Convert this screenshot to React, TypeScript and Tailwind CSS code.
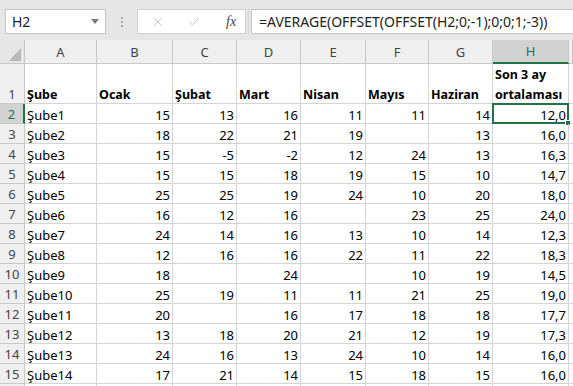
import React from 'react';
import { X, Check } from 'lucide-react';

const colW = ['w-[72px]', 'w-[76px]', 'w-[64px]', 'w-[64px]', 'w-[65px]', 'w-[63px]', 'w-[64px]', 'w-[76px]', 'flex-1'];
const letters = ['A', 'B', 'C', 'D', 'E', 'F', 'G', 'H', ''];

const rows: string[][] = [
  ['Şube1', '15', '13', '16', '11', '11', '14', '12,0'],
  ['Şube2', '18', '22', '21', '19', '', '13', '16,0'],
  ['Şube3', '15', '-5', '-2', '12', '24', '13', '16,3'],
  ['Şube4', '15', '15', '18', '19', '15', '10', '14,7'],
  ['Şube5', '25', '25', '19', '24', '10', '20', '18,0'],
  ['Şube6', '16', '12', '16', '', '23', '25', '24,0'],
  ['Şube7', '24', '14', '16', '13', '10', '14', '12,3'],
  ['Şube8', '12', '16', '16', '22', '11', '22', '18,3'],
  ['Şube9', '18', '', '24', '', '10', '19', '14,5'],
  ['Şube10', '25', '19', '11', '11', '21', '25', '19,0'],
  ['Şube11', '20', '', '16', '17', '18', '18', '17,7'],
  ['Şube12', '13', '18', '20', '21', '12', '19', '17,3'],
  ['Şube13', '24', '16', '13', '24', '10', '14', '16,0'],
  ['Şube14', '17', '21', '14', '15', '18', '15', '16,0'],
  ['', '', '', '', '', '', '', ''],
];

const heads = ['Şube', 'Ocak', 'Şubat', 'Mart', 'Nisan', 'Mayıs', 'Haziran'];

const FormulaBar = () => (
  <div className="h-[40px] bg-[#e6e6e6] flex items-start pt-[9px] pl-[5px]">
    <div className="w-[101px] h-[25px] bg-white border border-[#c6c6c6] flex items-center justify-between pl-[6px] pr-[6px] text-[14px] text-[#222]">
      <span>H2</span>
      <svg width="8" height="5" viewBox="0 0 8 5"><path d="M0 0h8L4 5z" fill="#7b7b7b" /></svg>
    </div>
    <div className="w-[31px] h-[25px] flex flex-col items-center justify-center gap-[2px]">
      <span className="w-[2px] h-[2px] bg-[#a8a8a8]" />
      <span className="w-[2px] h-[2px] bg-[#a8a8a8]" />
      <span className="w-[2px] h-[2px] bg-[#a8a8a8]" />
    </div>
    <div className="w-[109px] h-[25px] bg-white border border-[#d0d0d0] flex items-center">
      <X size={14} strokeWidth={1.2} color="#aaaaaa" className="ml-[13px]" />
      <Check size={14} strokeWidth={1.3} color="#b0b0b0" className="ml-[22px]" />
      <span className="ml-[25px] text-[14px] italic text-[#444] font-['Liberation_Serif',serif]">fx</span>
    </div>
    <div className="w-[5px] h-[25px] flex justify-center">
      <span className="w-[1px] h-full bg-[#d8d8d8]" />
    </div>
    <div className="flex-1 h-[25px] bg-white border border-r-0 border-[#c6c6c6] flex items-center pl-[7px] text-[14px] text-[#222] whitespace-nowrap overflow-hidden">
      =AVERAGE(OFFSET(OFFSET(H2;0;-1);0;0;1;-3))
    </div>
  </div>
);

export default function App() {
  return (
    <div className="w-[573px] h-[386px] overflow-hidden bg-white font-['Noto_Sans',sans-serif] text-[13px] text-black">
      <FormulaBar />
      {/* column headers */}
      <div className="flex h-[24px] bg-[#e6e6e6]">
        <div className="w-[25px] border-r border-b border-[#c8c8c8] bg-[#e6e6e6] flex items-end justify-end pr-[3px] pb-[2px]">
          <svg width="12" height="13" viewBox="0 0 12 13"><path d="M12 0V13H0z" fill="#b9b9b9" /></svg>
        </div>
        {letters.map((l, i) => (
          <div
            key={i}
            className={`${colW[i]} flex items-center justify-center pt-[2px] border-r ${
              l === 'H'
                ? 'bg-[#d2d2d2] text-[#217346] border-b-2 border-b-[#217346] border-r-[#c8c8c8]'
                : 'bg-[#efefef] text-[#444] border-b border-[#c8c8c8]'
            }`}
          >
            {l}
          </div>
        ))}
      </div>
      {/* row 1 */}
      <div className="flex h-[40px]">
        <div className="w-[25px] bg-[#efefef] border-r border-b border-[#c8c8c8] flex items-end justify-center text-[#444] leading-[18px]">1</div>
        {heads.map((h, i) => (
          <div key={i} className={`${colW[i]} border-r border-b border-[#d4d4d4] flex items-end pl-[2px] font-bold text-[12.5px] leading-[17px]`}>
            {h}
          </div>
        ))}
        <div className="w-[76px] border-r border-b border-[#d4d4d4] flex flex-col justify-end pl-[2px] font-bold text-[12.5px] leading-[20px]">
          <span>Son 3 ay</span>
          <span className="-mb-[2px]">ortalaması</span>
        </div>
        <div className="flex-1 border-b border-[#d4d4d4]" />
      </div>
      {rows.map((r, ri) => {
        const sel = ri === 0;
        const last = ri === rows.length - 1;
        return (
          <div key={ri} className="flex h-[20px]">
            <div
              className={`w-[25px] flex items-end justify-center leading-[17px] border-b ${
                sel
                  ? 'bg-[#d2d2d2] text-[#217346] border-r-2 border-r-[#217346] border-b-[#c8c8c8]'
                  : 'bg-[#efefef] text-[#444] border-r border-[#c8c8c8]'
              }`}
            >
              {last ? '' : ri + 2}
            </div>
            {r.map((c, ci) => (
              <div
                key={ci}
                className={`${colW[ci]} relative border-r border-b border-[#d4d4d4] flex items-end leading-[16px] ${
                  ci === 0 ? 'pl-[2px]' : 'justify-end pr-[2px]'
                }`}
              >
                {c}
                {sel && ci === 7 && (
                  <div className="absolute -top-[1px] -left-[1px] -right-[1px] -bottom-[1px] border-2 border-[#217346]">
                    <div className="absolute -right-[4px] -bottom-[4px] w-[6px] h-[6px] bg-[#217346] border border-white" />
                  </div>
                )}
              </div>
            ))}
            <div className="flex-1 border-b border-[#d4d4d4]" />
          </div>
        );
      })}
    </div>
  );
}
